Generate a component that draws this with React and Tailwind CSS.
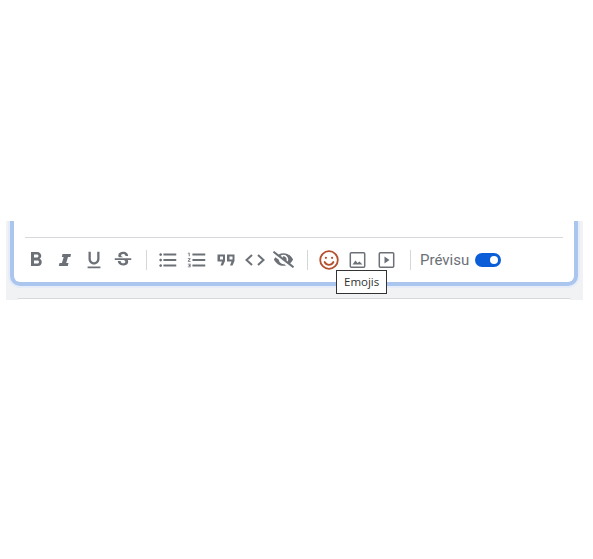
import React from 'react';
import {
  MdFormatBold,
  MdFormatUnderlined,
  MdStrikethroughS,
  MdFormatListBulleted,
  MdFormatListNumbered,
} from 'react-icons/md';
import { FaEyeSlash } from 'react-icons/fa';

const iconColor = '#6c7077';

const ToolButton = ({ children, className = 'w-[29px]' }) => (
  <span className={`flex justify-center text-[#6c7077] ${className}`}>{children}</span>
);

const Divider = () => <span className="ml-[9px] mr-[6px] h-[20px] w-px bg-[#d4d6d9]" />;

const ItalicIcon = () => (
  <svg width="16" height="16" viewBox="0 0 16 16" fill={iconColor}>
    <path d="M5.500 2h8.500l-.6 3h-2.400l-1.800 6h2.300l-.7 3H1.800l.7-3h2.400l1.800-6H4.800z" />
  </svg>
);

const QuoteIcon = () => (
  <svg width="20" height="20" viewBox="0 0 20 20" fill={iconColor}>
    <path d="M1.500 4.500h7.500v6.500L7 15.500H4.500l1.500-4H1.500zM4 6.500v3h3v-3z" fillRule="evenodd" />
    <path d="M11 4.500h7.500v6.500l-2 4.500H14l1.500-4H11zM13.500 6.500v3h3v-3z" fillRule="evenodd" />
  </svg>
);

const CodeIcon = () => (
  <svg width="22" height="20" viewBox="0 0 22 20" fill="none" stroke={iconColor} strokeWidth="2">
    <path d="M8 5l-5.500 5L8 15" />
    <path d="M14 5l5.500 5-5.500 5" />
  </svg>
);

const SmileIcon = () => (
  <svg width="20" height="20" viewBox="0 0 20 20" fill="none" stroke="#b5502f" strokeWidth="1.800">
    <circle cx="10" cy="10" r="8.800" />
    <circle cx="6.900" cy="7.800" r="1.100" fill="#b5502f" stroke="none" />
    <circle cx="13.100" cy="7.800" r="1.100" fill="#b5502f" stroke="none" />
    <path d="M5.600 12c1 1.900 2.600 2.800 4.400 2.800s3.400-.9 4.400-2.800" strokeLinecap="round" />
  </svg>
);

const ImageIcon = () => (
  <svg width="18" height="18" viewBox="0 0 18 18" fill="none">
    <rect x="1.300" y="1.800" width="14.400" height="14.400" rx="1" stroke={iconColor} strokeWidth="1.500" />
    <path d="M3.500 13.500l3-4 2 2.500 2-1.500 3 3z" fill={iconColor} />
  </svg>
);

const PlayIcon = () => (
  <svg width="18" height="18" viewBox="0 0 18 18" fill="none">
    <rect x="1.300" y="1.800" width="14.400" height="14.400" rx="1" stroke={iconColor} strokeWidth="1.500" />
    <path d="M6.500 5.500l5 3.500-5 3.500z" fill={iconColor} />
  </svg>
);

const App = () => {
  return (
    <div className="min-h-[559px] bg-white pt-[221px] font-['Roboto',sans-serif]">
      <div className="relative ml-[6px] h-[79px] w-[577px] overflow-hidden bg-[#f1f2f4] pl-[4px] pr-[5px]">
        <div className="h-[65px] rounded-b-[10px] border-x-[4px] border-b-[4px] border-[#aac5ee] bg-white pl-[11px] pr-[11px] pt-[16px] shadow-[0_0_0_2px_#e6edf8]">
          <div className="flex h-[44px] items-center border-t border-[#d6d8db]">
            <ToolButton className="-ml-[3px] w-[28px]"><MdFormatBold size={24} /></ToolButton>
            <ToolButton><ItalicIcon /></ToolButton>
            <ToolButton><MdFormatUnderlined size={22} /></ToolButton>
            <ToolButton><MdStrikethroughS size={22} /></ToolButton>
            <Divider />
            <ToolButton><MdFormatListBulleted size={22} /></ToolButton>
            <ToolButton><MdFormatListNumbered size={22} /></ToolButton>
            <ToolButton><QuoteIcon /></ToolButton>
            <ToolButton><CodeIcon /></ToolButton>
            <ToolButton><FaEyeSlash size={21} /></ToolButton>
            <Divider />
            <ToolButton><SmileIcon /></ToolButton>
            <ToolButton><ImageIcon /></ToolButton>
            <ToolButton><PlayIcon /></ToolButton>
            <Divider />
            <span className="ml-[3px] pt-[1px] text-[15px] text-[#6c7077]">Prévisu</span>
            <span className="ml-[6px] mt-[1px] flex h-[14px] w-[26px] items-center justify-end rounded-full bg-[#0b5ed7] pr-[3px]">
              <span className="h-[8px] w-[8px] rounded-full bg-white" />
            </span>
          </div>
        </div>
        <div className="mx-[7px] mt-[12px] h-[2px] rounded-t-[6px] border-t border-[#d6d8db] bg-white" />
        <div className="absolute left-[330px] top-[49px] border border-[#333] bg-white px-[7px] py-[3px] font-['Open_Sans',sans-serif] text-[11.500px] leading-[16px] text-[#333]">
          Emojis
        </div>
      </div>
    </div>
  );
};

export default App;
